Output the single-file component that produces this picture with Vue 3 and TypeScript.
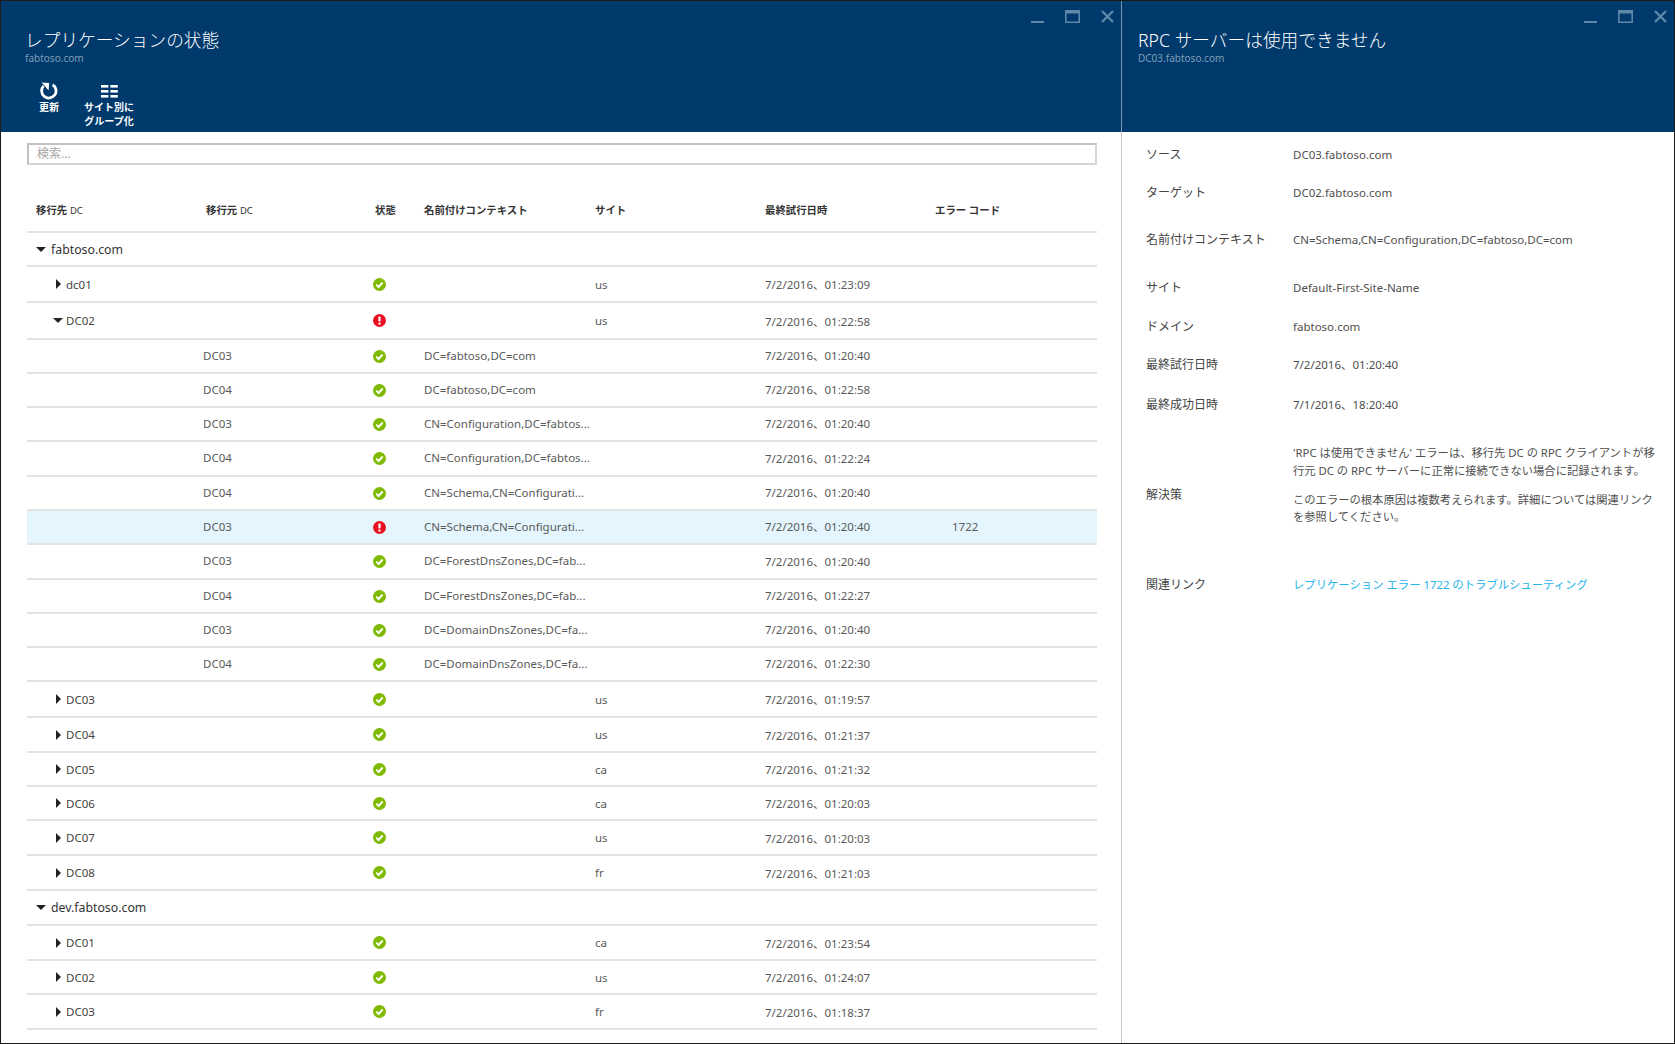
<script setup lang="ts">
interface Row {
  kind: 'group' | 'dc' | 'child'
  name: string
  open?: boolean
  status?: 'ok' | 'error'
  ctx?: string
  site?: string
  date?: string
  err?: string
  h: number
  selected?: boolean
}

const rows: Row[] = [
  { kind: 'group', name: 'fabtoso.com', open: true, h: 34 },
  { kind: 'dc', name: 'dc01', status: 'ok', site: 'us', date: '7/2/2016、01:23:09', h: 36 },
  { kind: 'dc', name: 'DC02', open: true, status: 'error', site: 'us', date: '7/2/2016、01:22:58', h: 37 },
  { kind: 'child', name: 'DC03', status: 'ok', ctx: 'DC=fabtoso,DC=com', date: '7/2/2016、01:20:40', h: 34 },
  { kind: 'child', name: 'DC04', status: 'ok', ctx: 'DC=fabtoso,DC=com', date: '7/2/2016、01:22:58', h: 34 },
  { kind: 'child', name: 'DC03', status: 'ok', ctx: 'CN=Configuration,DC=fabtos...', date: '7/2/2016、01:20:40', h: 34 },
  { kind: 'child', name: 'DC04', status: 'ok', ctx: 'CN=Configuration,DC=fabtos...', date: '7/2/2016、01:22:24', h: 35 },
  { kind: 'child', name: 'DC04', status: 'ok', ctx: 'CN=Schema,CN=Configurati...', date: '7/2/2016、01:20:40', h: 34 },
  { kind: 'child', name: 'DC03', status: 'error', ctx: 'CN=Schema,CN=Configurati...', date: '7/2/2016、01:20:40', err: '1722', h: 34, selected: true },
  { kind: 'child', name: 'DC03', status: 'ok', ctx: 'DC=ForestDnsZones,DC=fab...', date: '7/2/2016、01:20:40', h: 35 },
  { kind: 'child', name: 'DC04', status: 'ok', ctx: 'DC=ForestDnsZones,DC=fab...', date: '7/2/2016、01:22:27', h: 34 },
  { kind: 'child', name: 'DC03', status: 'ok', ctx: 'DC=DomainDnsZones,DC=fa...', date: '7/2/2016、01:20:40', h: 34 },
  { kind: 'child', name: 'DC04', status: 'ok', ctx: 'DC=DomainDnsZones,DC=fa...', date: '7/2/2016、01:22:30', h: 34 },
  { kind: 'dc', name: 'DC03', status: 'ok', site: 'us', date: '7/2/2016、01:19:57', h: 36 },
  { kind: 'dc', name: 'DC04', status: 'ok', site: 'us', date: '7/2/2016、01:21:37', h: 35 },
  { kind: 'dc', name: 'DC05', status: 'ok', site: 'ca', date: '7/2/2016、01:21:32', h: 34 },
  { kind: 'dc', name: 'DC06', status: 'ok', site: 'ca', date: '7/2/2016、01:20:03', h: 34 },
  { kind: 'dc', name: 'DC07', status: 'ok', site: 'us', date: '7/2/2016、01:20:03', h: 35 },
  { kind: 'dc', name: 'DC08', status: 'ok', site: 'fr', date: '7/2/2016、01:21:03', h: 35 },
  { kind: 'group', name: 'dev.fabtoso.com', open: true, h: 35 },
  { kind: 'dc', name: 'DC01', status: 'ok', site: 'ca', date: '7/2/2016、01:23:54', h: 35 },
  { kind: 'dc', name: 'DC02', status: 'ok', site: 'us', date: '7/2/2016、01:24:07', h: 34 },
  { kind: 'dc', name: 'DC03', status: 'ok', site: 'fr', date: '7/2/2016、01:18:37', h: 35 }
]

const details = [
  { label: 'ソース', value: 'DC03.fabtoso.com', h: 38 },
  { label: 'ターゲット', value: 'DC02.fabtoso.com', h: 38 },
  { label: '名前付けコンテキスト', value: 'CN=Schema,CN=Configuration,DC=fabtoso,DC=com', h: 56 },
  { label: 'サイト', value: 'Default-First-Site-Name', h: 40 },
  { label: 'ドメイン', value: 'fabtoso.com', h: 38 },
  { label: '最終試行日時', value: '7/2/2016、01:20:40', h: 38 },
  { label: '最終成功日時', value: '7/1/2016、18:20:40', h: 42 }
]
</script>

<template>
  <div class="page">
    <section class="blade left">
      <header class="blade-head">
        <div class="win-btns">
          <svg width="13" height="13" viewBox="0 0 13 13"><rect x="0" y="11" width="13" height="2" /></svg>
          <svg width="15" height="13" viewBox="0 0 15 13"><path fill-rule="evenodd" d="M0 0h15v13H0zM1.6 3.4v8h11.8v-8z" /></svg>
          <svg width="13" height="13" viewBox="0 0 13 13"><path d="M1 1l11 11M12 1L1 12" fill="none" stroke-width="2.4" /></svg>
        </div>
        <h1 class="title">レプリケーションの状態</h1>
        <div class="sub">fabtoso.com</div>
        <div class="toolbar">
          <div class="tool tool-refresh">
            <svg width="18" height="18" viewBox="0 0 18 18">
              <path d="M3.6 3.9A7.2 7.2 0 1 0 12.6 2.7" fill="none" stroke="#fff" stroke-width="2.8" />
              <path d="M1.6 0.4l7.6 0.6-0.6 7.6z" fill="#fff" />
            </svg>
            <span>更新</span>
          </div>
          <div class="tool tool-group">
            <svg width="17" height="13" viewBox="0 0 17 13" fill="#fff">
              <rect x="0" y="0" width="7.4" height="2.6" /><rect x="9.4" y="0" width="7.4" height="2.6" />
              <rect x="0" y="5" width="7.4" height="2.6" /><rect x="9.4" y="5" width="7.4" height="2.6" />
              <rect x="0" y="10" width="7.4" height="2.6" /><rect x="9.4" y="10" width="7.4" height="2.6" />
            </svg>
            <span>サイト別に<br />グループ化</span>
          </div>
        </div>
      </header>

      <div class="body">
        <div class="search">検索...</div>
        <div class="grid head-row">
          <div>移行先 <span class="latin">DC</span></div>
          <div>移行元 <span class="latin">DC</span></div>
          <div>状態</div>
          <div>名前付けコンテキスト</div>
          <div>サイト</div>
          <div>最終試行日時</div>
          <div>エラー コード</div>
        </div>
        <div
          v-for="(r, i) in rows"
          :key="i"
          class="grid row"
          :class="[r.kind, { selected: r.selected }]"
          :style="{ height: r.h + 'px' }"
        >
          <div class="tree">
            <template v-if="r.kind !== 'child'">
              <i :class="r.open ? 'arrow-down' : 'arrow-right'"></i>
              <span>{{ r.name }}</span>
            </template>
          </div>
          <div class="src">{{ r.kind === 'child' ? r.name : '' }}</div>
          <div class="state">
            <svg v-if="r.status === 'ok'" width="13" height="13" viewBox="0 0 13 13">
              <circle cx="6.5" cy="6.5" r="6.5" fill="#7fba00" />
              <path d="M3.3 6.7l2.3 2.3 4.1-4.5" fill="none" stroke="#fff" stroke-width="1.9" />
            </svg>
            <svg v-else-if="r.status === 'error'" width="13" height="13" viewBox="0 0 13 13">
              <circle cx="6.5" cy="6.5" r="6.5" fill="#e81123" />
              <rect x="5.4" y="2.4" width="2.2" height="5.2" rx="0.8" fill="#fff" />
              <rect x="5.4" y="8.6" width="2.2" height="2.1" rx="0.8" fill="#fff" />
            </svg>
          </div>
          <div>{{ r.ctx }}</div>
          <div>{{ r.site }}</div>
          <div>{{ r.date }}</div>
          <div class="err">{{ r.err }}</div>
        </div>
      </div>
    </section>

    <section class="blade right">
      <header class="blade-head">
        <div class="win-btns">
          <svg width="13" height="13" viewBox="0 0 13 13"><rect x="0" y="11" width="13" height="2" /></svg>
          <svg width="15" height="13" viewBox="0 0 15 13"><path fill-rule="evenodd" d="M0 0h15v13H0zM1.6 3.4v8h11.8v-8z" /></svg>
          <svg width="13" height="13" viewBox="0 0 13 13"><path d="M1 1l11 11M12 1L1 12" fill="none" stroke-width="2.4" /></svg>
        </div>
        <h1 class="title">RPC サーバーは使用できません</h1>
        <div class="sub narrow">DC03.fabtoso.com</div>
      </header>

      <div class="detail">
        <div v-for="d in details" :key="d.label" class="d-row" :style="{ height: d.h + 'px' }">
          <div class="d-label">{{ d.label }}</div>
          <div>{{ d.value }}</div>
        </div>
        <div class="d-row solution">
          <div class="d-label">解決策</div>
          <div class="solution-text">
            <p>'RPC は使用できません' エラーは、移行先 DC の RPC クライアントが移行元 DC の RPC サーバーに正常に接続できない場合に記録されます。</p>
            <p>このエラーの根本原因は複数考えられます。詳細については関連リンクを参照してください。</p>
          </div>
        </div>
        <div class="d-row link-row">
          <div class="d-label">関連リンク</div>
          <a class="link">レプリケーション エラー 1722 のトラブルシューティング</a>
        </div>
      </div>
    </section>
  </div>
</template>

<style scoped>
.page {
  width: 1675px;
  height: 1044px;
  box-sizing: border-box;
  border: 1px solid #1c1c1c;
  display: flex;
  background: #fff;
  overflow: hidden;
  font-family: "Noto Sans", "Noto Sans CJK JP", sans-serif;
  font-size: 11.5px;
  color: #555;
}

.blade {
  display: flex;
  flex-direction: column;
  flex: none;
}

.left {
  width: 1120px;
  border-right: 1.5px solid #c4c4c4;
}

.right {
  flex: 1;
}

.blade-head {
  height: 131px;
  box-sizing: border-box;
  background: #003a6c;
  padding: 28px 0 0 24px;
  position: relative;
  color: #fff;
}

.left .blade-head {
  box-shadow: 2px 0 0 #7e96ab;
}

.right .blade-head {
  padding-left: 16px;
}

.win-btns {
  position: absolute;
  top: 9px;
  right: 7px;
  display: flex;
  gap: 21px;
  fill: #5f87a7;
}

.win-btns svg:last-child path {
  stroke: #5f87a7;
}

.title {
  margin: 0;
  font-size: 17.7px;
  font-weight: 300;
  line-height: 22px;
}

.sub {
  font-size: 10px;
  line-height: 13px;
  margin-top: 1px;
  color: #7f9db7;
}

.toolbar {
  display: flex;
  margin-top: 17px;
}

.tool {
  display: flex;
  flex-direction: column;
  align-items: center;
  font-size: 10px;
  font-weight: 700;
  line-height: 13.5px;
  text-align: center;
}

.tool-refresh {
  width: 46px;
  margin-left: 1px;
}

.tool-refresh svg {
  margin-bottom: 1px;
}

.tool-group {
  width: 72px;
  margin-left: 1px;
}

.tool-group svg {
  margin: 3px 0 3px;
}

.body {
  padding: 11px 24px 0 26px;
}

.search {
  height: 22px;
  box-sizing: border-box;
  border: 2px solid #d6d6d6;
  border-top-color: #c2c2c2;
  border-left-color: #c2c2c2;
  padding-left: 8px;
  line-height: 18px;
  font-size: 12px;
  color: #a6a6a6;
}

.grid {
  display: grid;
  grid-template-columns: 170px 169px 49px 171px 170px 170px 1fr;
  box-sizing: border-box;
  align-items: center;
  padding-left: 9px;
  border-bottom: 2px solid #e3e3e3;
}

.head-row {
  height: 68px;
  font-size: 10.4px;
  font-weight: 700;
  color: #333;
  padding-top: 22px;
}

.latin {
  font-weight: 400;
  font-size: 9.5px;
}

.row {
  color: #595959;
}

.row.selected {
  background: #e4f5fd;
}

.child > div:not(.state) {
  padding-bottom: 2px;
}

.tree {
  display: flex;
  align-items: center;
  color: #444;
  padding-left: 20px;
}

.tree i {
  display: block;
  flex: none;
}

.arrow-right {
  width: 0;
  height: 0;
  border-left: 5px solid #222;
  border-top: 5px solid transparent;
  border-bottom: 5px solid transparent;
  margin-right: 5px;
}

.arrow-down {
  width: 0;
  height: 0;
  border-top: 5px solid #222;
  border-left: 5px solid transparent;
  border-right: 5px solid transparent;
  margin-left: -3px;
  margin-right: 3px;
}

.group .tree {
  padding-left: 0;
  font-size: 12.3px;
  color: #333;
}

.group .tree i {
  margin-left: 0;
  margin-right: 5px;
}

.src {
  margin-left: -3px;
}

.state {
  display: flex;
  margin-left: -2px;
}

.state svg {
  display: block;
}

.err {
  padding-left: 17px;
}

.detail {
  padding: 3px 0 0 24px;
}

.d-row {
  display: flex;
  align-items: center;
  color: #4f4f4f;
}

.d-label {
  width: 147px;
  flex: none;
  color: #444;
  font-size: 12px;
}

.solution {
  height: 138px;
}

.solution-text {
  width: 366px;
  font-size: 11.3px;
  line-height: 17.5px;
  margin-bottom: 18px;
}

.solution-text p {
  margin: 0 0 11.5px;
}

.solution-text p:last-child {
  margin-bottom: 0;
}

.link-row {
  height: 42px;
}

.link {
  font-size: 11.35px;
  color: #26b4ea;
}
</style>

<style>
html,
body {
  margin: 0;
  background: #fff;
}
</style>
